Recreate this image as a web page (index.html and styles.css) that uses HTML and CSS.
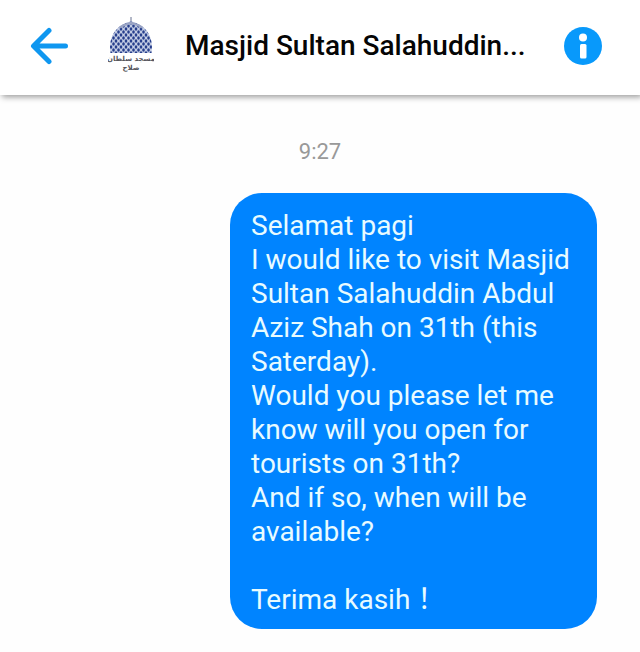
FILE: index.html
```html
<!DOCTYPE html>
<html lang="en">
<head>
    <meta charset="utf-8">
    <meta name="viewport" content="width=device-width, initial-scale=1">
    <title>Messages</title>
    <link rel="stylesheet" href="styles.css">
</head>
<body>
    <header class="chat-header">
        <button class="icon-button" type="button" aria-label="Back">
            <svg width="38" height="38" viewBox="0 0 38 38" fill="none" stroke="#0f97f0" stroke-width="5" stroke-linecap="round" stroke-linejoin="round">
                <path d="M19 3.500L3.500 19 19 34.500M4.500 19h31"/>
            </svg>
        </button>
        <svg class="avatar" width="46" height="58" viewBox="0 0 46 58" aria-hidden="true">
            <defs>
                <pattern id="lattice" x="3" width="5" height="6" patternUnits="userSpaceOnUse">
                    <g fill="#273f8c">
                        <ellipse cx="2.500" cy="3" rx="1.300" ry="1.800"/>
                        <ellipse cx="0" cy="0" rx="1.300" ry="1.800"/>
                        <ellipse cx="5" cy="0" rx="1.300" ry="1.800"/>
                        <ellipse cx="0" cy="6" rx="1.300" ry="1.800"/>
                        <ellipse cx="5" cy="6" rx="1.300" ry="1.800"/>
                    </g>
                </pattern>
            </defs>
            <path d="M23 0v6" stroke="#66708f" stroke-width="1"/>
            <path d="M2.500 36C1 27 3 17 10 11 14 7 19 6 23 4c4 2 9 3 13 7 7 6 9 16 7.500 25z" fill="#c3cce4"/>
            <path d="M2.500 36C1 27 3 17 10 11 14 7 19 6 23 4c4 2 9 3 13 7 7 6 9 16 7.500 25z" fill="url(#lattice)"/>
            <path d="M12 10.500C16 7 20 7 23 6c3 1 7 1 11 4.500" fill="none" stroke="#9aa4c4" stroke-width="2.500"/>
            <text class="avatar-text" x="23" y="44" text-anchor="middle">مسجد سلطان</text>
            <text class="avatar-text" x="23" y="53" text-anchor="middle">صلاح</text>
        </svg>
        <h1 class="chat-name">Masjid Sultan Salahuddin...</h1>
        <button class="icon-button" type="button" aria-label="Information">
            <svg width="38" height="38" viewBox="0 0 38 38">
                <circle cx="19" cy="19" r="19" fill="#0899fb"/>
                <circle cx="19" cy="10.500" r="4" fill="#fff"/>
                <rect x="16" y="17" width="6.500" height="14.500" rx="1.500" fill="#fff"/>
            </svg>
        </button>
    </header>
    <main class="chat">
        <time class="chat-time">9:27</time>
        <p class="message">Selamat pagi<br>
            I would like to visit Masjid Sultan Salahuddin Abdul Aziz Shah on 31th (this Saterday).<br>
            Would you please let me know will you open for tourists on 31th?<br>
            And if so, when will be available?<br>
            <br>
            Terima kasih！</p>
    </main>
</body>
</html>
```
FILE: styles.css
```css
body {
    margin: 0;
    font-family: Roboto, "Noto Sans CJK JP", sans-serif;
    background-color: #fefefe;
}
.chat-header {
    display: flex;
    align-items: center;
    box-sizing: border-box;
    min-height: 95px;
    padding: 0 38px 3px 30px;
    background-color: #ffffff;
    box-shadow: 2px 2px 6px rgba(0, 0, 0, 0.4);
}
.icon-button {
    flex: none;
    padding: 0;
    border: none;
    background: none;
    cursor: pointer;
}
.icon-button svg {
    display: block;
}
.avatar {
    flex: none;
    margin: 0 31px 0 40px;
}
.avatar-text {
    font-family: "DejaVu Sans", sans-serif;
    font-size: 7px;
    font-weight: bold;
    fill: #55555c;
}
.chat-name {
    flex: 1;
    margin: 0;
    font-size: 28px;
    font-weight: 500;
    line-height: 34px;
    white-space: nowrap;
    color: #050505;
}
.chat {
    display: flex;
    flex-direction: column;
    padding: 43px 43px 23px;
}
.chat-time {
    align-self: center;
    margin-bottom: 27px;
    font-size: 22px;
    line-height: 28px;
    color: #999999;
}
.message {
    align-self: flex-end;
    box-sizing: border-box;
    max-width: 367px;
    margin: 0;
    padding: 16px 20px 12px 21px;
    border-radius: 32px;
    font-size: 28px;
    line-height: 34px;
    color: #e8fbff;
    background-color: #0084ff;
}
```
